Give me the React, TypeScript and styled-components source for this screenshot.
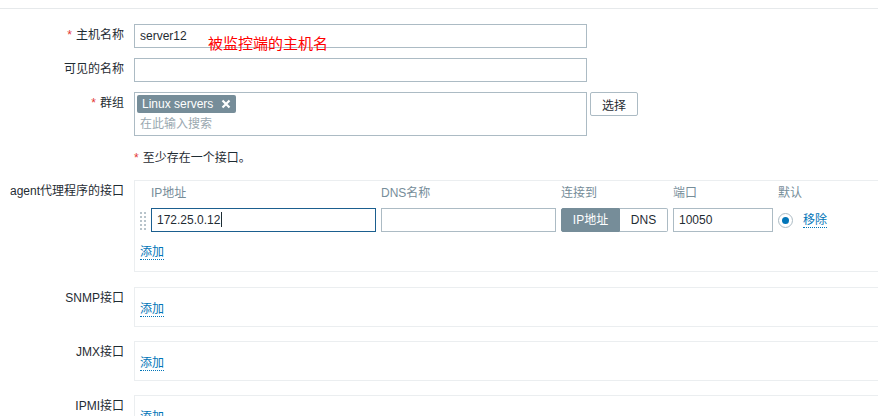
import React from "react";
import styled, { createGlobalStyle } from "styled-components";

const Global = createGlobalStyle`
  html, body { margin: 0; padding: 0; background: #fff; overflow: hidden; }
  body {
    font-family: "Liberation Sans", Arial, "Noto Sans CJK SC", sans-serif;
    font-size: 12px;
    color: #1f2c33;
  }
`;

const Page = styled.div`
  width: 878px;
  height: 416px;
  overflow: hidden;
`;

const TopBar = styled.div`
  height: 8px;
  border-bottom: 1px solid #e6e9eb;
`;

const Form = styled.div`
  display: flex;
  flex-direction: column;
  padding-top: 15px;
`;

const Row = styled.div<{ $mb: number }>`
  display: grid;
  grid-template-columns: 124px 1fr;
  column-gap: 10px;
  margin-bottom: ${(p) => p.$mb}px;
`;

const Label = styled.div`
  text-align: right;
  padding-top: 4px;
  line-height: 14px;
  white-space: nowrap;
`;

const Req = styled.span`
  color: #e33734;
  margin-right: 4px;
`;

const Field = styled.div`
  position: relative;
  display: flex;
  align-items: flex-start;
  gap: 3px;
`;

const TextBox = styled.div<{ $w: number; $focus?: boolean }>`
  box-sizing: border-box;
  width: ${(p) => p.$w}px;
  height: 24px;
  border: 1px solid ${(p) => (p.$focus ? "#1b5f8f" : "#acbbc4")};
  background: #fff;
  padding: 0 5px;
  line-height: 22px;
  white-space: nowrap;
  overflow: hidden;
`;

const Caret = styled.span`
  display: inline-block;
  width: 1px;
  height: 15px;
  background: #1f2c33;
  vertical-align: -3px;
  margin-left: 1px;
`;

const Note = styled.div`
  position: absolute;
  left: 74px;
  top: 10px;
  color: #ff0000;
  font-family: "Noto Sans CJK SC", sans-serif;
  font-size: 15px;
  line-height: 18px;
  white-space: nowrap;
`;

const MultiSelect = styled.div`
  box-sizing: border-box;
  width: 453px;
  height: 44px;
  border: 1px solid #acbbc4;
  padding: 2px;
  display: flex;
  flex-direction: column;
  align-items: flex-start;
`;

const Tag = styled.span`
  display: inline-flex;
  align-items: center;
  height: 18px;
  background: #768d99;
  color: #fff;
  border-radius: 2px;
  padding: 0 5px 0 5px;
  gap: 8px;
  line-height: 18px;
`;

const Placeholder = styled.div`
  color: #9aa8b0;
  padding-left: 3px;
  line-height: 22px;
`;

const Button = styled.button`
  box-sizing: border-box;
  width: 48px;
  height: 24px;
  border: 1px solid #acbbc4;
  border-radius: 2px;
  background: #fff;
  color: #1f2c33;
  font: inherit;
  padding: 0;
  cursor: pointer;
`;

const Hint = styled.div`
  line-height: 24px;
`;

const IfaceBox = styled.div<{ $pt: number; $pb: number }>`
  box-sizing: border-box;
  width: 900px;
  border: 1px solid #ebeef0;
  padding: ${(p) => p.$pt}px 0 ${(p) => p.$pb}px 5px;
`;

const IfaceGrid = styled.div`
  display: grid;
  grid-template-columns: 6px 225px 175px 107px 100px 15px auto;
  column-gap: 5px;
  align-items: center;
  justify-content: start;
`;

const Head = styled.div`
  color: #768d99;
  line-height: 14px;
  margin-bottom: 8px;
  white-space: nowrap;
`;

const Toggle = styled.div`
  display: grid;
  grid-template-columns: 59px 48px;
  height: 24px;
`;

const Seg = styled.div<{ $on?: boolean }>`
  box-sizing: border-box;
  border: 1px solid ${(p) => (p.$on ? "#768d99" : "#acbbc4")};
  ${(p) => (p.$on ? "" : "border-left: none;")}
  background: ${(p) => (p.$on ? "#768d99" : "#fff")};
  color: ${(p) => (p.$on ? "#fff" : "#1f2c33")};
  border-radius: ${(p) => (p.$on ? "2px 0 0 2px" : "0 2px 2px 0")};
  text-align: center;
  line-height: 22px;
`;

const Radio = styled.span`
  box-sizing: border-box;
  width: 15px;
  height: 15px;
  border-radius: 50%;
  border: 1px solid #acbbc4;
  background: #fff;
  display: flex;
  align-items: center;
  justify-content: center;
  &::after {
    content: "";
    width: 7px;
    height: 7px;
    border-radius: 50%;
    background: #0275b8;
  }
`;

const Link = styled.a<{ $ml?: number }>`
  display: inline-block;
  color: #0275b8;
  text-decoration: none;
  line-height: 14px;
  border-bottom: 1px dotted #0275b8;
  margin-left: ${(p) => p.$ml ?? 0}px;
  cursor: pointer;
`;

const AddWrap = styled.div<{ $mt: number }>`
  margin-top: ${(p) => p.$mt}px;
`;

const Handle = () => (
  <svg width="6" height="20" viewBox="0 0 6 20">
    {[0, 1, 2, 3, 4].map((r) =>
      [0, 4].map((x) => (
        <rect key={`${r}-${x}`} x={x} y={2 + r * 4} width="2" height="2" fill="#b8c4cb" />
      ))
    )}
  </svg>
);

const CloseX = () => (
  <svg width="10" height="10" viewBox="0 0 10 10">
    <path d="M1.5 1.5 L8.5 8.5 M8.5 1.5 L1.5 8.5" stroke="#fff" strokeWidth="2.2" />
  </svg>
);

export default function App() {
  return (
    <Page>
      <Global />
      <TopBar />
      <Form>
        <Row $mb={10}>
          <Label>
            <Req>*</Req>主机名称
          </Label>
          <Field>
            <TextBox $w={453}>server12</TextBox>
            <Note>被监控端的主机名</Note>
          </Field>
        </Row>
        <Row $mb={10}>
          <Label>可见的名称</Label>
          <Field>
            <TextBox $w={453} />
          </Field>
        </Row>
        <Row $mb={10}>
          <Label>
            <Req>*</Req>群组
          </Label>
          <Field>
            <MultiSelect>
              <Tag>
                Linux servers
                <CloseX />
              </Tag>
              <Placeholder>在此输入搜索</Placeholder>
            </MultiSelect>
            <Button>选择</Button>
          </Field>
        </Row>
        <Row $mb={10}>
          <span />
          <Hint>
            <Req>*</Req>至少存在一个接口。
          </Hint>
        </Row>
        <Row $mb={15}>
          <Label>agent代理程序的接口</Label>
          <IfaceBox $pt={5} $pb={11}>
            <IfaceGrid>
              <span />
              <Head>IP地址</Head>
              <Head>DNS名称</Head>
              <Head>连接到</Head>
              <Head>端口</Head>
              <Head>默认</Head>
              <span />
              <Handle />
              <TextBox $w={225} $focus>
                172.25.0.12
                <Caret />
              </TextBox>
              <TextBox $w={175} />
              <Toggle>
                <Seg $on>IP地址</Seg>
                <Seg>DNS</Seg>
              </Toggle>
              <TextBox $w={100}>10050</TextBox>
              <Radio />
              <span>
                <Link $ml={5}>移除</Link>
              </span>
            </IfaceGrid>
            <AddWrap $mt={13}>
              <Link>添加</Link>
            </AddWrap>
          </IfaceBox>
        </Row>
        <Row $mb={14}>
          <Label>SNMP接口</Label>
          <IfaceBox $pt={14} $pb={9}>
            <Link>添加</Link>
          </IfaceBox>
        </Row>
        <Row $mb={14}>
          <Label>JMX接口</Label>
          <IfaceBox $pt={14} $pb={9}>
            <Link>添加</Link>
          </IfaceBox>
        </Row>
        <Row $mb={14}>
          <Label>IPMI接口</Label>
          <IfaceBox $pt={14} $pb={9}>
            <Link>添加</Link>
          </IfaceBox>
        </Row>
      </Form>
    </Page>
  );
}
